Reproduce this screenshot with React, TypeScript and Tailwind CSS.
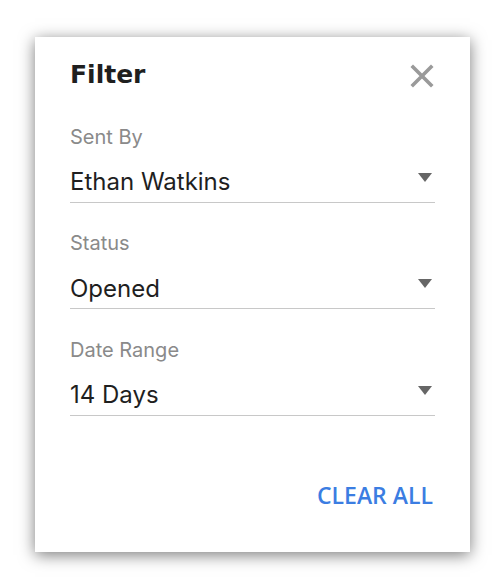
import React from "react";

function Field({ label, value }: { label: string; value: string }) {
  return (
    <div className="flex flex-col">
      <div className="text-[20px] leading-[26px] text-[#8a8a8a]">{label}</div>
      <div className="mt-[17.5px] flex items-start justify-between border-b-[1.5px] border-[#c8c8c8] pb-[4.5px]">
        <span className="text-[24px] leading-[30px] text-[#1f1f1f]">{value}</span>
        <svg width="14" height="10" viewBox="0 0 14 10" className="mt-[5.5px] mr-[3px]">
          <path d="M0 0 L14 0 L7 9 Z" fill="#666666" />
        </svg>
      </div>
    </div>
  );
}

export default function App() {
  return (
    <div className="w-[496px] h-[588px] bg-white pl-[35px] pt-[37px]" style={{ fontFamily: "Inter, 'Liberation Sans', sans-serif" }}>
      <div className="w-[435px] h-[515px] bg-white shadow-[0_3px_15px_rgba(0,0,0,0.52)] px-[35px] pt-[21px] flex flex-col">
        <div className="flex items-center justify-between">
          <h1
            className="text-[25px] leading-[32px] font-bold text-[#1f1f1f] mt-[1px]"
            style={{ fontFamily: "'DejaVu Sans', Inter, sans-serif" }}
          >
            Filter
          </h1>
          <svg width="24" height="24" viewBox="0 0 24 24" className="mt-[3px] mr-[1px]">
            <path d="M3 3 L21 21 M21 3 L3 21" stroke="#9a9a9a" strokeWidth="3.6" strokeLinecap="square" />
          </svg>
        </div>
        <div className="mt-[32.5px] flex flex-col gap-[27.5px]">
          <Field label="Sent By" value="Ethan Watkins" />
          <Field label="Status" value="Opened" />
          <Field label="Date Range" value="14 Days" />
        </div>
        <div className="mt-[64px] flex justify-end">
          <button
            className="text-[23px] leading-[30px] font-semibold text-[#3b7de2] mr-[2px]"
            style={{ fontFamily: "'Open Sans', 'Liberation Sans', sans-serif" }}
          >
            CLEAR ALL
          </button>
        </div>
      </div>
    </div>
  );
}
